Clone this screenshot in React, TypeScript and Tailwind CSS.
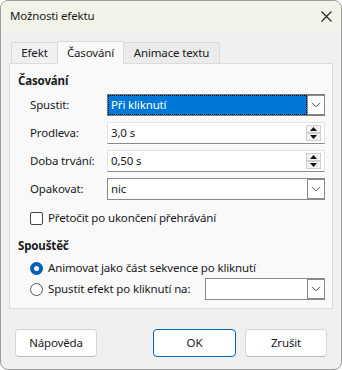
import React from "react";

function ChevronDown() {
    return (
        <svg width="10" height="6" viewBox="0 0 10 6" className="block">
            <path d="M1 0.8 L5 4.8 L9 0.8" fill="none" stroke="#555" strokeWidth="1" />
        </svg>
    );
}

function DropButton() {
    return (
        <div className="w-[18px] h-full bg-white border border-[#8a8a8a] flex items-center justify-center shrink-0">
            <ChevronDown />
        </div>
    );
}

function SpinInput({ value }: { value: string }) {
    return (
        <div className="flex-1 h-[22px] bg-white border border-[#e3e3e3] border-b-[#8a8a8a] flex items-center pl-[3px] pr-[3px]">
            <span className="flex-1">{value}</span>
            <div className="flex flex-col w-[15px] gap-0">
                <div className="h-[8px] bg-[#f3f3f3] border border-[#cfcfcf] flex items-center justify-center">
                    <svg width="7" height="4" viewBox="0 0 7 4"><path d="M0 4 L3.5 0 L7 4 Z" fill="#111" /></svg>
                </div>
                <div className="h-[8px] bg-[#f3f3f3] border border-[#cfcfcf] flex items-center justify-center">
                    <svg width="7" height="4" viewBox="0 0 7 4"><path d="M0 0 L3.5 4 L7 0 Z" fill="#111" /></svg>
                </div>
            </div>
        </div>
    );
}

export default function App() {
    return (
        <div className="w-[342px] h-[370px] bg-white font-['Noto_Sans',sans-serif] text-[11.5px] tracking-[-0.15px] leading-[16px] text-[#1a1a1a]">
            <div className="w-full h-full rounded-[8px] border border-[#9c9c9c] bg-[#f0f0f0] overflow-hidden flex flex-col">
                {/* Title bar */}
                <div className="h-[30px] bg-[#f2f4ea] flex items-center justify-between pl-[9px] pr-[9px] shrink-0">
                    <span>Možnosti efektu</span>
                    <svg width="11" height="11" viewBox="0 0 11 11">
                        <path d="M0.5 0.5 L10.5 10.5 M10.5 0.5 L0.5 10.5" stroke="#222" strokeWidth="1.1" />
                    </svg>
                </div>

                {/* Tabs + panel */}
                <div className="px-[8px] pt-[10px]">
                    <div className="flex items-end h-[22px] pl-[2px]">
                        <div className="h-[21px] w-[47px] border border-[#d9d9d9] border-b-0 bg-[#f0f0f0] flex items-center justify-center">Efekt</div>
                        <div className="h-[23px] w-[66px] border border-[#d9d9d9] border-b-0 border-l-0 bg-[#f9f9f9] flex items-center justify-center relative z-10 -mb-px">Časování</div>
                        <div className="h-[21px] w-[96px] border border-[#d9d9d9] border-b-0 border-l-0 bg-[#ebebeb] flex items-center justify-center">Animace textu</div>
                    </div>
                    <div className="h-[246px] border border-[#dcdcdc] bg-[#f9f9f9] pl-[8px] pr-[7px] pt-[9px]">
                        <div className="font-bold">Časování</div>

                        <div className="flex flex-col gap-[6px] mt-[5px] pl-[12px]">
                            <div className="flex items-center h-[22px]">
                                <span className="w-[77px]">Spustit:</span>
                                <div className="flex-1 h-full flex border border-[#7a7a7a] border-r-0">
                                    <div className="flex-1 bg-[#0078d7] border border-dotted border-black text-white flex items-center pl-[2px]">Při kliknutí</div>
                                    <DropButton />
                                </div>
                            </div>
                            <div className="flex items-center h-[22px]">
                                <span className="w-[77px]">Prodleva:</span>
                                <SpinInput value="3,0 s" />
                            </div>
                            <div className="flex items-center h-[22px]">
                                <span className="w-[77px]">Doba trvání:</span>
                                <SpinInput value="0,50 s" />
                            </div>
                            <div className="flex items-center h-[22px]">
                                <span className="w-[77px]">Opakovat:</span>
                                <div className="flex-1 h-full flex bg-white border border-[#8a8a8a] border-r-0">
                                    <div className="flex-1 flex items-center pl-[3px]">nic</div>
                                    <DropButton />
                                </div>
                            </div>
                        </div>

                        <div className="flex items-center gap-[5px] pl-[12px] mt-[10px]">
                            <div className="w-[13px] h-[13px] rounded-[2px] border border-[#444] bg-white" />
                            <span>Přetočit po ukončení přehrávání</span>
                        </div>

                        <div className="font-bold mt-[12px]">Spouštěč</div>

                        <div className="flex items-center gap-[5px] pl-[12px] mt-[6px]">
                            <div className="w-[13px] h-[13px] rounded-full bg-[#005fb8] flex items-center justify-center">
                                <div className="w-[5px] h-[5px] rounded-full bg-white" />
                            </div>
                            <span>Animovat jako část sekvence po kliknutí</span>
                        </div>

                        <div className="flex items-center pl-[12px] mt-[2px] h-[22px]">
                            <div className="w-[13px] h-[13px] rounded-full border border-[#555] bg-white mr-[5px]" />
                            <span className="w-[157px]">Spustit efekt po kliknutí na:</span>
                            <div className="flex-1 h-full flex bg-white border border-[#8a8a8a] border-r-0">
                                <div className="flex-1" />
                                <DropButton />
                            </div>
                        </div>
                    </div>
                </div>

                {/* Buttons */}
                <div className="flex items-center px-[14px] mt-[20px]">
                    <div className="w-[82px] h-[28px] rounded-[4px] bg-white border border-[#d5d5d5] border-b-[#bdbdbd] flex items-center justify-center">Nápověda</div>
                    <div className="flex-1" />
                    <div className="w-[83px] h-[28px] rounded-[4px] bg-white border border-[#0067c0] flex items-center justify-center">OK</div>
                    <div className="w-[82px] h-[28px] rounded-[4px] bg-white border border-[#d5d5d5] border-b-[#bdbdbd] flex items-center justify-center ml-[9px]">Zrušit</div>
                </div>
            </div>
        </div>
    );
}
